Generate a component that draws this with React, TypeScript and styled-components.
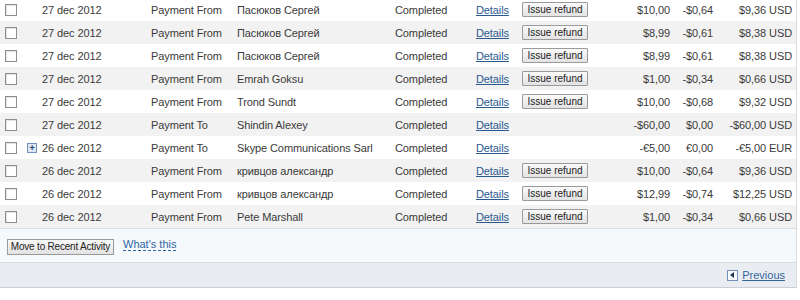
import React from "react";
import styled, { createGlobalStyle } from "styled-components";

const Global = createGlobalStyle`
  html, body { margin: 0; padding: 0; background: #fff; }
  body { font-family: "Liberation Sans", Arial, sans-serif; font-size: 11px; color: #3a3a3a; overflow: hidden; }
`;

const Panel = styled.div`
  width: 796px;
  border-right: 1px solid #dcdcdc;
  margin-top: -2px;
`;

const Row = styled.div<{ $alt: boolean }>`
  display: grid;
  grid-template-columns: 21px 21px 109px 86px 158px 81px 46px 90px 58px 43px 79px;
  align-items: center;
  height: 23px;
  background: ${(p) => (p.$alt ? "#f2f2f2" : "#fff")};
`;

const Cell = styled.div<{ $right?: boolean }>`
  white-space: nowrap;
  text-align: ${(p) => (p.$right ? "right" : "left")};
  line-height: 14px;
  font-size: 11px;
  letter-spacing: -0.1px;
`;

const Check = styled.span`
  display: block;
  margin-left: 5px;
  width: 10px;
  height: 10px;
  border: 1px solid #8e8e8e;
  background: #fff;
  box-shadow: inset 1px 1px 0 #e4e4e4;
`;

const Expand = styled.span`
  display: flex;
  align-items: center;
  justify-content: center;
  margin-left: 6px;
  width: 8px;
  height: 8px;
  border: 1px solid #6f8fb8;
  background: #dde8f4;
  color: #23456e;
  font-size: 9px;
  font-weight: bold;
  line-height: 8px;
`;

const Link = styled.a`
  color: #28598f;
  text-decoration: underline;
  cursor: pointer;
`;

const RefundButton = styled.button`
  box-sizing: border-box;
  width: 66px;
  height: 15px;
  padding: 0;
  font-family: "Liberation Sans", Arial, sans-serif;
  font-size: 10px;
  line-height: 12px;
  color: #222;
  border: 1px solid #9a9a9a;
  border-radius: 1px;
  background: linear-gradient(#fafafa, #e3e3e3);
`;

const Footer = styled.div`
  height: 33px;
  border-top: 1px solid #d9dde2;
  background: #f5f9fc;
  display: flex;
  align-items: center;
  padding-left: 7px;
  gap: 9px;
`;

const MoveButton = styled.button`
  box-sizing: border-box;
  width: 107px;
  height: 16px;
  padding: 0;
  font-family: "Liberation Sans", Arial, sans-serif;
  font-size: 10px;
  letter-spacing: -0.2px;
  color: #222;
  border: 1px solid #9a9a9a;
  background: linear-gradient(#fafafa, #e2e2e2);
  margin-top: 2px;
`;

const Help = styled.span`
  color: #2f63a0;
  font-size: 11px;
  border-bottom: 1px dashed #2f63a0;
  line-height: 12px;
  margin-top: -2px;
`;

const Pager = styled.div`
  height: 24px;
  border-top: 1px solid #d4dae1;
  border-bottom: 1px solid #c9ced4;
  background: #e9edf1;
  display: flex;
  align-items: center;
  justify-content: flex-end;
  padding-right: 11px;
  gap: 4px;
`;

const PrevIcon = styled.span`
  box-sizing: border-box;
  width: 11px;
  height: 11px;
  border: 1px solid #6f8fb8;
  background: #f7f9fc;
  display: flex;
  align-items: center;
  justify-content: center;
  &::before {
    content: "";
    border-top: 3px solid transparent;
    border-bottom: 3px solid transparent;
    border-right: 4px solid #1f3550;
    margin-left: -1px;
  }
`;

const PrevLink = styled(Link)`
  font-size: 11px;
  color: #3565a0;
`;

type Tx = {
  date: string;
  type: string;
  name: string;
  refund: boolean;
  expand?: boolean;
  gross: string;
  fee: string;
  net: string;
};

const rows: Tx[] = [
  { date: "27 dec 2012", type: "Payment From", name: "Пасюков Сергей", refund: true, gross: "$10,00", fee: "-$0,64", net: "$9,36 USD" },
  { date: "27 dec 2012", type: "Payment From", name: "Пасюков Сергей", refund: true, gross: "$8,99", fee: "-$0,61", net: "$8,38 USD" },
  { date: "27 dec 2012", type: "Payment From", name: "Пасюков Сергей", refund: true, gross: "$8,99", fee: "-$0,61", net: "$8,38 USD" },
  { date: "27 dec 2012", type: "Payment From", name: "Emrah Goksu", refund: true, gross: "$1,00", fee: "-$0,34", net: "$0,66 USD" },
  { date: "27 dec 2012", type: "Payment From", name: "Trond Sundt", refund: true, gross: "$10,00", fee: "-$0,68", net: "$9,32 USD" },
  { date: "27 dec 2012", type: "Payment To", name: "Shindin Alexey", refund: false, gross: "-$60,00", fee: "$0,00", net: "-$60,00 USD" },
  { date: "26 dec 2012", type: "Payment To", name: "Skype Communications Sarl", refund: false, expand: true, gross: "-€5,00", fee: "€0,00", net: "-€5,00 EUR" },
  { date: "26 dec 2012", type: "Payment From", name: "кривцов александр", refund: true, gross: "$10,00", fee: "-$0,64", net: "$9,36 USD" },
  { date: "26 dec 2012", type: "Payment From", name: "кривцов александр", refund: true, gross: "$12,99", fee: "-$0,74", net: "$12,25 USD" },
  { date: "26 dec 2012", type: "Payment From", name: "Pete Marshall", refund: true, gross: "$1,00", fee: "-$0,34", net: "$0,66 USD" },
];

export default function App() {
  return (
    <>
      <Global />
      <Panel>
        {rows.map((r, i) => (
          <Row key={i} $alt={i % 2 === 1}>
            <Cell><Check /></Cell>
            <Cell>{r.expand ? <Expand>+</Expand> : null}</Cell>
            <Cell>{r.date}</Cell>
            <Cell>{r.type}</Cell>
            <Cell>{r.name}</Cell>
            <Cell>Completed</Cell>
            <Cell><Link>Details</Link></Cell>
            <Cell>{r.refund ? <RefundButton>Issue refund</RefundButton> : null}</Cell>
            <Cell $right>{r.gross}</Cell>
            <Cell $right>{r.fee}</Cell>
            <Cell $right>{r.net}</Cell>
          </Row>
        ))}
        <Footer>
          <MoveButton>Move to Recent Activity</MoveButton>
          <Help>What's this</Help>
        </Footer>
        <Pager>
          <PrevIcon />
          <PrevLink>Previous</PrevLink>
        </Pager>
      </Panel>
    </>
  );
}
